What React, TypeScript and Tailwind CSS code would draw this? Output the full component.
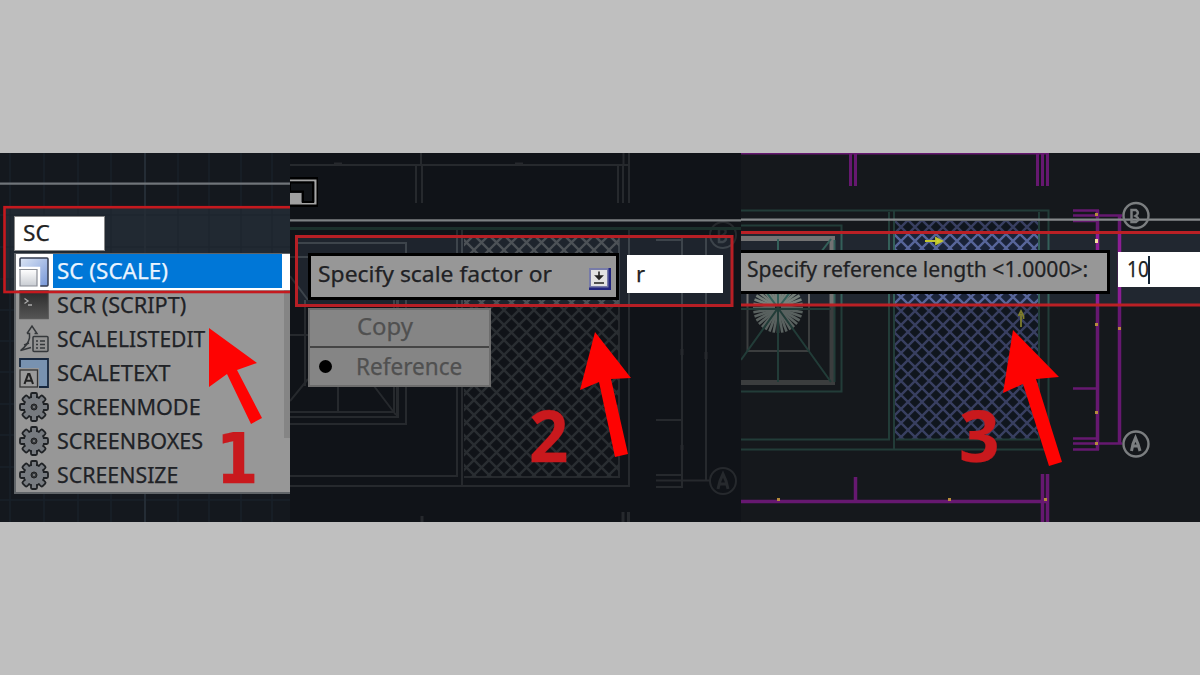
import type { ReactNode } from 'react';

const FONT = "font-['Noto_Sans',sans-serif] [-webkit-text-stroke:0.25px_currentColor]";

function Gear() {
  const teeth = [0, 45, 90, 135, 180, 225, 270, 315];
  return (
    <svg viewBox="0 0 30 30" className="size-[30px]">
      <g fill="#777b80" stroke="#1f2225" strokeWidth="1.8">
        {teeth.map((a) => (
          <rect key={a} x="12" y="1" width="6" height="8" rx="1.2" transform={`rotate(${a} 15 15)`} />
        ))}
        <circle cx="15" cy="15" r="10.4" />
      </g>
      {teeth.map((a) => (
        <rect key={a} x="13" y="3" width="4" height="6" fill="#777b80" transform={`rotate(${a} 15 15)`} />
      ))}
      <circle cx="15" cy="15" r="3" fill="#34383c" stroke="#222" />
      <circle cx="15" cy="15" r="1" fill="#888" />
    </svg>
  );
}

function ScaleIcon() {
  return (
    <svg viewBox="0 0 30 30" className="size-[30px]">
      <defs>
        <linearGradient id="blue" x2="1" y2="1">
          <stop stopColor="#dce6f5" />
          <stop offset="1" stopColor="#7797d8" />
        </linearGradient>
        <linearGradient id="pale" x2="0" y2="1">
          <stop stopColor="#fff" />
          <stop offset="1" stopColor="#c8ccd2" />
        </linearGradient>
      </defs>
      <path d="M1 12V2Q1 1 2 1H28Q29 1 29 2V28Q29 29 28 29H20V11Z" fill="url(#blue)" stroke="#343c50" strokeWidth="1.5" />
      <path d="M0 11H20V30" fill="none" stroke="#fff" strokeWidth="2.4" />
      <path d="M1 12.5V29H18V12.5Z" fill="url(#pale)" stroke="#8a8e96" strokeWidth="1.2" />
    </svg>
  );
}

function ScriptIcon() {
  return (
    <svg viewBox="0 0 30 30" className="size-[30px]">
      <defs>
        <linearGradient id="dark" x2="0" y2="1">
          <stop stopColor="#2a2a2a" />
          <stop offset="1" stopColor="#555" />
        </linearGradient>
      </defs>
      <rect x=".7" y=".7" width="28.6" height="28" fill="url(#dark)" stroke="#555" />
      <path d="M5.5 8.500L9 11L5.5 13.500M9 15H13" fill="none" stroke="#aaa" strokeWidth="1.3" />
    </svg>
  );
}

function ScaleListIcon() {
  return (
    <svg viewBox="0 0 30 30" className="size-[30px]" fill="none" stroke="#35383b" strokeWidth="1.5">
      <path d="M8 9.500L13 2L18 9.500H15.500M8 9.500H10.500V14Q9 21 1.500 26.500L12 23.500" />
      <path d="M5 21L10 19" />
      <rect x="14" y="12.5" width="15" height="15" rx="1" fill="#929292" />
      <path d="M17 17H19M21 17H26M17 20.5H19M21 20.5H26M17 24H19M21 24H26" strokeWidth="1.6" />
    </svg>
  );
}

function ScaleTextIcon() {
  return (
    <svg viewBox="0 0 30 30" className="size-[30px]">
      <path d="M1 10V1H29V29H20V10Z" fill="#7892b0" />
      <path d="M1 9V1H29V29H20" fill="none" stroke="#17273d" strokeWidth="1.8" />
      <rect x="1" y="12" width="17.5" height="17" fill="#9a9a9a" stroke="#333" strokeWidth="1.3" />
      <path d="M5.5 26L9.2 16H10.4L14 26M7 22.7H12.5" fill="none" stroke="#222" strokeWidth="2.1" />
    </svg>
  );
}

type Command = { label: string; icon: ReactNode; fit: string };

const commands: Command[] = [
  { label: 'SCR (SCRIPT)', icon: <ScriptIcon />, fit: 'scale-x-[0.985]' },
  { label: 'SCALELISTEDIT', icon: <ScaleListIcon />, fit: 'scale-x-[0.956]' },
  { label: 'SCALETEXT', icon: <ScaleTextIcon />, fit: 'scale-x-[1]' },
  { label: 'SCREENMODE', icon: <Gear />, fit: 'scale-x-[0.982]' },
  { label: 'SCREENBOXES', icon: <Gear />, fit: 'scale-x-[0.98]' },
  { label: 'SCREENSIZE', icon: <Gear />, fit: 'scale-x-[0.97]' },
];

function Arrow({ points }: { points: string }) {
  return <polygon points={points} fill="#fe0302" />;
}

function CommandPanel() {
  return (
    <section className="relative h-full w-[290px] shrink-0 overflow-hidden bg-[#14181e]">
      <svg viewBox="0 153 290 369" className="absolute inset-0 size-full">
        <rect x="4" y="207" width="290" height="85" fill="#222932" />
        <g stroke="#19202a" strokeWidth="1.5">
          {[10, 44, 78, 111, 178, 209, 241, 272].map((x) => <path key={x} d={`M${x} 153V522`} />)}
          {[215, 247, 279, 310, 341, 372, 404, 435, 467, 500].map((y) => <path key={y} d={`M0 ${y}H290`} />)}
        </g>
        <rect x="4" y="207" width="290" height="85" fill="#222932" opacity=".6" />
        <path d="M145 153V522" stroke="#242c35" strokeWidth="2" />
        <path d="M0 183.7H290" stroke="#70757a" strokeWidth="2.2" />
      </svg>
      <div className="relative flex flex-col pt-[63px] pl-[14px]">
        <div className="flex h-[35px] w-[91px] items-center border border-[#888] bg-white pl-2 text-[22px] text-[#222]">
          <span className="origin-left scale-x-[1.03] pb-[2px]">SC</span>
        </div>
        <ul className="mt-[2px] h-[241px] w-[276px] border-t border-b-2 border-l-2 border-[#606468] bg-[#979797]">
          <li className="flex h-[36px] bg-white pl-[3px]">
            <span className="flex w-[34px] items-center"><ScaleIcon /></span>
            <span className="flex h-[34px] w-[229px] items-center bg-[#0077d7] pl-[4px] text-[22px] text-[#eaf4ff]">
              <span className="origin-left scale-x-[1.02] pb-px whitespace-nowrap">SC (SCALE)</span>
            </span>
          </li>
          <div className="relative">
            <div className="absolute top-[2px] right-0 h-[148px] w-[6px] bg-[#858585]" />
            <div className="-mt-[2px]">
              {commands.map((c) => (
                <li key={c.label} className="flex h-[34px] items-center gap-[8px] pl-[3px] text-[22px] text-[#202226]">
                  {c.icon}
                  <span className={`origin-left pb-[2px] whitespace-nowrap ${c.fit}`}>{c.label}</span>
                </li>
              ))}
            </div>
          </div>
        </ul>
      </div>
      <svg viewBox="0 153 290 369" className="absolute inset-0 size-full">
        <rect x="4.5" y="207.2" width="300" height="84.8" fill="none" stroke="#c5191e" strokeWidth="2.6" />
        <Arrow points="209,328 257,363 237,370 262,418 251,424 227,374 209,387" />
      </svg>
      <span className="absolute top-[271px] left-[216px] origin-left scale-x-[0.87] font-['DejaVu_Sans'] text-[70px] leading-[70px] font-bold text-[#c9191d]">1</span>
    </section>
  );
}

function Hatch({ id, color, size }: { id: string; color: string; size: number }) {
  const end = size + 1;
  return (
    <pattern id={id} width={size} height={size} patternUnits="userSpaceOnUse" x="894" y="220">
      <path d={`M-1 -1L${end} ${end}M${end} -1L-1 ${end}`} stroke={color} strokeWidth="2.3" />
    </pattern>
  );
}

function GreyPlan({ id, line, hatch }: { id: string; line: string; hatch: string }) {
  return (
    <g fill="none" stroke={line} strokeWidth="2">
      <defs><Hatch id={id} color={hatch} size={15} /></defs>
      <path d="M290 165H630M421 153V165M623.5 153V165M629 153V165M416 165V203M422 165V203M618 165V203M623 165V203M629 165V203" />
      <path d="M334 163.500H342M515 163.500H523" />
      <path d="M296 243H406V424H290M290 257H397V416M290 412H394V257M290 417H398V257" />
      <path d="M338 386V413M374 386L396 415M290 401L308 379M290 276L308 300M305 300V386M290 335H309" />
      <path d="M457 230V476H290M462 230V486M290 486H629V230M464 477H619V236" />
      <rect x="464" y="237" width="155" height="240" fill={`url(#${id})`} stroke="none" />
      <path d="M656 240H683M682 235V487M706 235V480.500M656 420H683M656 475H683M656 480.500H710M656 487H683" />
      <path d="M682 349V355M706 352V359M682 445V450M623 512V522M628.500 512V522M422 516V522" strokeWidth="3" />
      <circle cx="723" cy="235" r="13" />
      <path d="M719 242V229H724Q728 232 723 235Q729 239 723 242Z" strokeWidth="2.5" />
      <circle cx="723" cy="481" r="13" />
      <path d="M718 489L720 481L723 474L726 481L728 489M720 484H726" strokeWidth="3" />
    </g>
  );
}

function FactorPanel() {
  return (
    <section className="relative h-full w-[451px] shrink-0 overflow-hidden bg-[#101318]">
      <svg viewBox="290 153 451 369" className="absolute inset-0 size-full">
        <defs><clipPath id="band2"><rect x="297" y="237" width="434" height="68" /></clipPath></defs>
        <GreyPlan id="hatchA" line="#26292d" hatch="#292d31" />
        <g clipPath="url(#band2)">
          <rect x="297" y="237" width="434" height="68" fill="#1e242d" />
          <GreyPlan id="hatchB" line="#3d444b" hatch="#4c5156" />
        </g>
        <path d="M290 228.500H741" stroke="#1b302b" strokeWidth="3" />
        <path d="M290 220.300H741" stroke="#7c8082" strokeWidth="2.2" />
        <path d="M290 177H318V207H290Z" fill="#000" />
        <path d="M290 180.500H315.500V203.500H290" fill="#15171a" stroke="#a5a5a5" strokeWidth="2" />
        <path d="M290 182.500H313V202H303V191.500H290Z" fill="#111418" stroke="#000" strokeWidth="2" />
        <path d="M290 193H301.500V204H290Z" fill="#a0a0a0" />
      </svg>
      <div className="relative flex flex-col pt-[100px] pl-[18px]">
        <div className="flex items-start gap-[8px]">
          <div className="flex h-[47px] w-[311px] items-center border-[3px] border-black bg-[#979797] pr-[5px] pl-[7px]">
            <span className="-mt-[7px] w-[271px] shrink-0 text-[22px] whitespace-nowrap text-[#202124]">
              <span className="inline-block origin-left scale-x-[1.04]">Specify scale factor or</span>
            </span>
            <svg viewBox="0 0 22 22" className="mt-[5px] size-[22px] shrink-0">
              <rect width="22" height="22" fill="#222680" />
              <rect x="0" y="0" width="19.500" height="19.500" fill="#777ba8" />
              <rect x="2" y="2" width="16" height="16" fill="#e2e2e2" />
              <path d="M10 3.500V10M7 8L10 11L13 8ZM5 15H15" fill="#222" stroke="#222" strokeWidth="1.600" />
            </svg>
          </div>
          <div className="mt-[2px] flex h-[38px] w-[96px] items-center bg-white pl-[9px] text-[22px] text-[#222]">
            <span className="pb-[2px]">r</span>
          </div>
        </div>
        <div className="mt-[8px] flex h-[79px] w-[183px] flex-col border-2 border-[#6d6d6d] bg-[#858585] text-[23px] text-[#505050]">
          <div className="flex h-[38px] items-center border-b-2 border-[#454545] pl-[47px]">
            <span className="origin-left scale-x-[1.04] pb-[4px]">Copy</span>
          </div>
          <div className="flex h-[37px] items-center pl-[9px]">
            <span className="size-[13px] rounded-full bg-black" />
            <span className="ml-[24px] origin-left scale-x-[0.98]">Reference</span>
          </div>
        </div>
      </div>
      <svg viewBox="290 153 451 369" className="absolute inset-0 size-full">
        <rect x="296.500" y="236.500" width="435.500" height="69" fill="none" stroke="#b71f25" strokeWidth="3" />
        <Arrow points="595,332 631,378 611,379 628,454 615,457 599,382 580,390" />
      </svg>
      <span className="absolute top-[246px] left-[239px] origin-left scale-x-[0.97] font-['Open_Sans'] text-[71px] leading-[72px] font-bold text-[#c9191d]">2</span>
    </section>
  );
}

type PlanColors = { green: string; grey: string; hatch: string; magenta: string; fan: string };

function ColorPlan({ id, c }: { id: string; c: PlanColors }) {
  return (
    <g fill="none" strokeWidth="2">
      <defs><Hatch id={id} color={c.hatch} size={14} /></defs>
      <rect x="894" y="221" width="145" height="218" fill={`url(#${id})`} />
      <g stroke={c.grey}>
        <path d="M741 238.500H835M741 382.500H835" strokeWidth="5" />
        <path d="M832 238V383" strokeWidth="5" />
        <path d="M747.500 268V351H809V268Z" />
      </g>
      <g stroke={c.fan} strokeWidth="2">
        {Array.from({ length: 36 }, (_, i) => (
          <path key={i} d="M778 300V283" transform={`rotate(${i * 10} 778 308)`} strokeWidth="2.600" />
        ))}
        <circle cx="778" cy="308" r="7" strokeWidth="8" />
      </g>
      <g stroke={c.green}>
        <path d="M741 225.500H841.500V391.500H741M741 309H831M778 239V382" />
        <path d="M831 239L778 308L831 382M741 360L778 308L741 258M834.500 240V382" />
        <path d="M741 210.500H1048.500V449.500H741M741 439.500H889V212M894 210V449M896 439.500H1039V212" />
      </g>
      <g stroke={c.magenta}>
        <path d="M741 153.500H1048" />
        <path d="M850.500 153V186M855.500 153V186M1037.500 153V186M1042.500 153V186M1047.500 153V186" strokeWidth="3" />
        <path d="M1073 210.500H1099M1073 215.500H1122M1073 221H1099M1073 388.500H1099M1073 438.500H1099M1073 443.500H1122M1073 449.500H1099" strokeWidth="2.500" />
        <path d="M1097.500 210V450M1119.500 215V444M741 501.500H1049M855.500 477V502M1042.500 474V522M1047.500 474V522" strokeWidth="3.500" />
      </g>
    </g>
  );
}

function ReferencePanel() {
  return (
    <section className="relative h-full w-[459px] shrink-0 overflow-hidden bg-[#15181c]">
      <svg viewBox="741 153 459 369" className="absolute inset-0 size-full">
        <defs><clipPath id="band3"><rect x="741" y="234" width="459" height="70" /></clipPath></defs>
        <rect x="894" y="221" width="145" height="218" fill="#10161e" />
        <ColorPlan id="hatchC" c={{ green: '#223c38', grey: '#3b3d3e', hatch: '#383f61', magenta: '#661870', fan: '#59615f' }} />
        <g clipPath="url(#band3)">
          <rect x="741" y="234" width="459" height="70" fill="#212730" />
          <rect x="894" y="234" width="145" height="70" fill="#1a2338" />
          <ColorPlan id="hatchD" c={{ green: '#34605a', grey: '#737373', hatch: '#57659a', magenta: '#8c1e94', fan: '#76807a' }} />
        </g>
        <path d="M741 219.700H1200" stroke="#86898b" strokeWidth="2.200" />
        <g fill="none" stroke="#7b7e80" strokeWidth="2.400">
          <circle cx="1136" cy="215.500" r="12.500" />
          <path d="M1131.500 222V210H1136Q1140 213 1135.500 216Q1141 219 1136 222Z" strokeWidth="2.500" />
          <circle cx="1136" cy="444" r="12.500" />
          <path d="M1131.500 451L1133 444L1135.500 438L1138 444L1140 451M1133 446H1138" strokeWidth="3" />
        </g>
        <g fill="#b58b3c">
          {[[777, 498], [948, 498], [1044, 498], [1095, 213], [1095, 323], [1118, 327], [1095, 411], [1095, 442]].map(([x, y]) => (
            <rect key={`${x}-${y}`} x={x} y={y} width="3" height="3" />
          ))}
          <rect x="1095" y="239" width="3" height="4" fill="#f4dd9c" />
        </g>
        <path d="M925 241H936M936 238L942 241L936 244Z" fill="#d3d62b" stroke="#c2c62f" strokeWidth="1.800" />
        <path d="M1021 327V314M1018.500 316L1021 311L1023.500 316V319" fill="none" stroke="#7e7d2c" strokeWidth="1.800" />
      </svg>
      <div className="relative flex items-start gap-[8px] pt-[97px]">
        <div className="flex h-[44px] w-[369px] shrink-0 items-center border-y-[3px] border-r-[3px] border-black bg-[#979797] pl-[6px]">
          <span className="-mt-[7px] origin-left scale-x-[0.96] text-[22px] whitespace-nowrap text-[#202124]">Specify reference length &lt;1.0000&gt;:</span>
        </div>
        <div className="mt-[2px] flex h-[35px] flex-1 items-center bg-white pl-[9px] text-[22px] text-[#222]">
          <span className="origin-left scale-x-[0.87] pb-[3px]">10</span>
          <span className="-ml-[4px] h-[28px] w-[2px] bg-[#152535]" />
        </div>
      </div>
      <svg viewBox="741 153 459 369" className="absolute inset-0 size-full">
        <path d="M741 232.500H1200M741 305H1200" stroke="#ba2025" strokeWidth="3" />
        <Arrow points="1013,330 1059,377 1036,379 1062,462 1049,466 1023,384 1003,393" />
      </svg>
      <span className="absolute top-[246px] left-[218px] origin-left font-['Open_Sans'] text-[71px] leading-[72px] font-bold text-[#c9191d]">3</span>
    </section>
  );
}

export default function App() {
  return (
    <main className={`flex h-[675px] w-[1200px] flex-col justify-start overflow-hidden bg-[#bfbfbf] pt-[153px] ${FONT}`}>
      <div className="flex h-[369px]">
        <CommandPanel />
        <FactorPanel />
        <ReferencePanel />
      </div>
    </main>
  );
}
